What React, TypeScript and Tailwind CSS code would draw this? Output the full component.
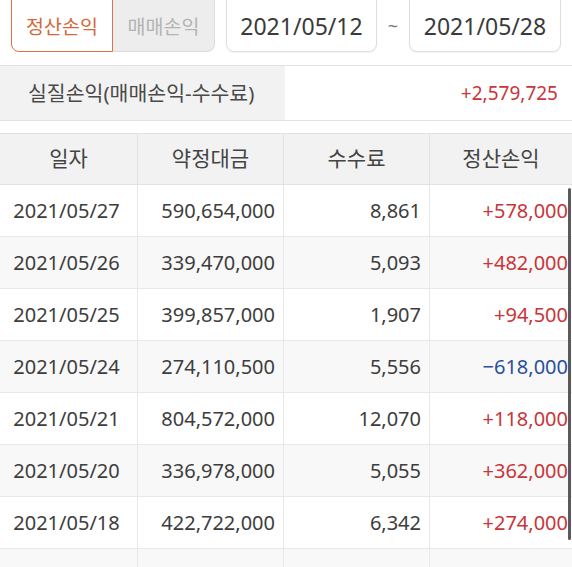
import React from 'react';

type Row = {
  date: string;
  amount: string;
  fee: string;
  pnl: string;
};

const rows: Row[] = [
  { date: '2021/05/27', amount: '590,654,000', fee: '8,861', pnl: '+578,000' },
  { date: '2021/05/26', amount: '339,470,000', fee: '5,093', pnl: '+482,000' },
  { date: '2021/05/25', amount: '399,857,000', fee: '1,907', pnl: '+94,500' },
  { date: '2021/05/24', amount: '274,110,500', fee: '5,556', pnl: '−618,000' },
  { date: '2021/05/21', amount: '804,572,000', fee: '12,070', pnl: '+118,000' },
  { date: '2021/05/20', amount: '336,978,000', fee: '5,055', pnl: '+362,000' },
  { date: '2021/05/18', amount: '422,722,000', fee: '6,342', pnl: '+274,000' },
  { date: '', amount: '', fee: '', pnl: '' },
];

export default function App() {
  return (
    <div
      className="relative w-[572px] h-[567px] overflow-hidden bg-white text-[#3d3d3d]"
      style={{ fontFamily: '"Noto Sans", "Noto Sans CJK KR", sans-serif' }}
    >
      {/* period selector */}
      <div className="flex items-end h-[52px] pl-[11px]">
        <div className="flex h-[62px] w-[204px]">
          <button className="w-[102px] h-full border border-[#d8734a] rounded-l-[8px] bg-white text-[19.5px] text-[#d4683b] pt-[12px]">
            정산손익
          </button>
          <button className="flex-1 h-full border border-l-0 border-[#dcdcdc] rounded-r-[8px] bg-[#ededed] text-[19.5px] text-[#b3b3b3] pt-[12px]">
            매매손익
          </button>
        </div>
        <div className="ml-[11px] w-[151px] h-[62px] border border-[#dedede] rounded-[8px] bg-white flex items-center justify-center pt-[10px] text-[23px] text-[#3a3a3a] shadow-[0_1px_1px_rgba(0,0,0,0.05)]">
          2021/05/12
        </div>
        <div className="w-[32px] h-[52px] flex items-center justify-center text-[18px] text-[#777]">~</div>
        <div className="w-[152px] h-[62px] border border-[#dedede] rounded-[8px] bg-white flex items-center justify-center pt-[10px] text-[23px] text-[#3a3a3a] shadow-[0_1px_1px_rgba(0,0,0,0.05)]">
          2021/05/28
        </div>
      </div>

      {/* summary */}
      <div className="mt-[13px] flex h-[56px] border-y border-[#e2e2e2]">
        <div className="w-[285px] bg-[#f2f2f2] flex items-center pl-[28px] text-[20.5px] text-[#4a4a4a]">
          실질손익(매매손익-수수료)
        </div>
        <div className="flex-1 flex items-center justify-end pr-[14px] text-[19px] text-[#c9353a]">
          +2,579,725
        </div>
      </div>

      {/* table */}
      <div className="mt-[12px] border-t border-[#e2e2e2]">
        <div className="flex h-[51px] bg-[#f2f2f2] border-b border-[#e2e2e2] text-[21px] text-[#444]">
          <div className="w-[138px] border-r border-[#e2e2e2] flex items-center justify-center">일자</div>
          <div className="w-[146px] border-r border-[#e2e2e2] flex items-center justify-center">약정대금</div>
          <div className="w-[146px] border-r border-[#e2e2e2] flex items-center justify-center">수수료</div>
          <div className="flex-1 flex items-center justify-center">정산손익</div>
        </div>
        {rows.map((r, i) => (
          <div
            key={i}
            className={`flex h-[52px] border-b border-[#e8e8e8] text-[20px] ${i % 2 === 1 ? 'bg-[#f8f8f8]' : 'bg-white'}`}
          >
            <div className="w-[138px] border-r border-[#e8e8e8] flex items-center justify-center pr-[4px]">{r.date}</div>
            <div className="w-[146px] border-r border-[#e8e8e8] flex items-center justify-end pr-[8px]">{r.amount}</div>
            <div className="w-[146px] border-r border-[#e8e8e8] flex items-center justify-end pr-[8px]">{r.fee}</div>
            <div
              className={`flex-1 flex items-center justify-end pr-[4px] ${r.pnl.startsWith('+') ? 'text-[#c9353a]' : 'text-[#2b4f9e]'}`}
            >
              {r.pnl}
            </div>
          </div>
        ))}
      </div>

      {/* scrollbar */}
      <div className="absolute right-[1px] top-[188px] w-[3px] h-[352px] bg-[#5a5a5a] rounded-full" />
    </div>
  );
}
